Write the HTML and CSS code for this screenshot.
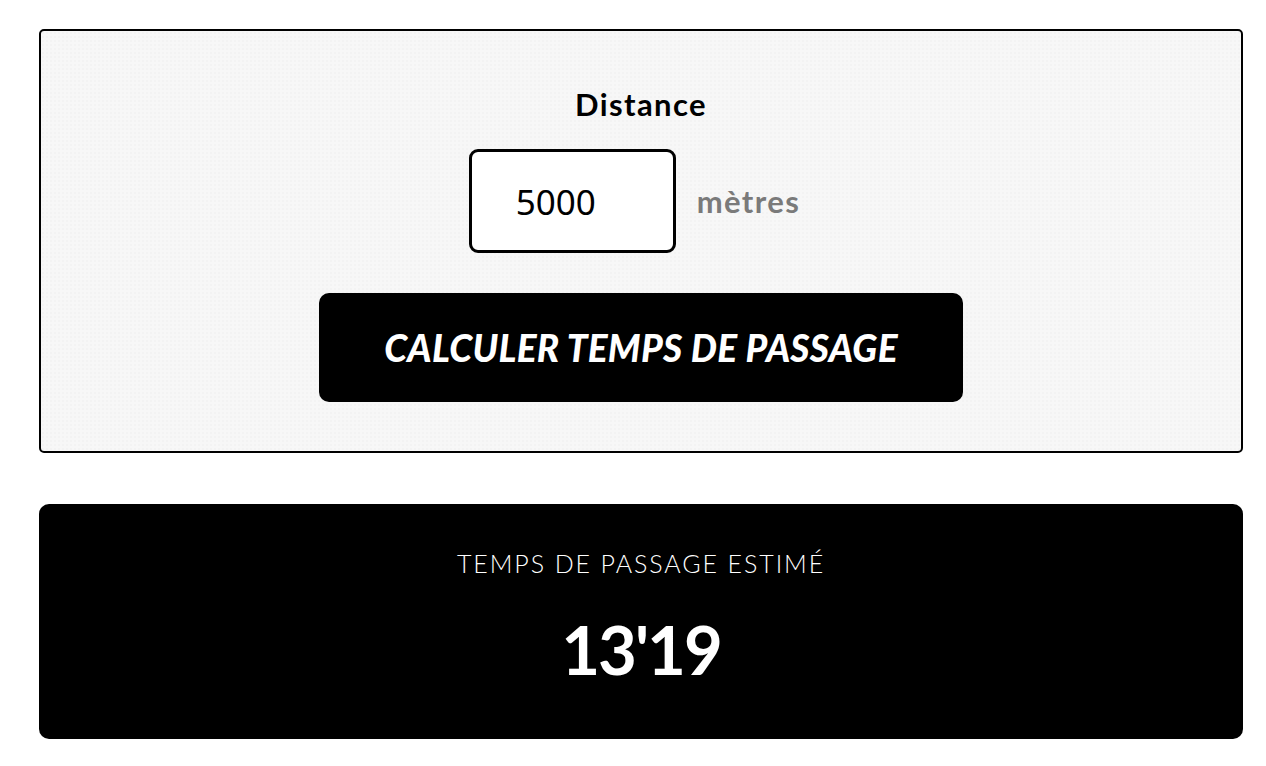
FILE: index.html
```html
<!DOCTYPE html>
<html lang="fr">
<head>
<meta charset="UTF-8" />
<meta name="viewport" content="width=device-width, initial-scale=1" />
<title>Temps de passage</title>
<link rel="stylesheet" href="styles.css">
</head>
<body>

<div class="page">
  <form class="calcPanel" onsubmit="return false;">
    <label class="fieldLabel" for="distance">Distance</label>
    <div class="fieldRow">
      <input id="distance" class="distanceInput" type="text" value="5000" />
      <span class="unit">mètres</span>
    </div>
    <button class="calcButton" type="submit">CALCULER TEMPS DE PASSAGE</button>
  </form>

  <div class="resultBox">
    <div class="resultLabel">Temps de passage estimé</div>
    <div class="resultValue">13'19</div>
  </div>
</div>

</body>
</html>
```

FILE: styles.css
```css
body {
  margin: 0;
  font-family: Lato, "Noto Sans", sans-serif;
  background: #fff;
  color: #000;
}

.page {
  width: 1204px;
  padding: 29px 0 0 39px;
  display: flex;
  flex-direction: column;
  gap: 51px;
}

/* panneau de saisie */
.calcPanel {
  margin: 0;
  border: 2px solid #000;
  border-radius: 5px;
  background-color: #f7f7f7;
  background-image: radial-gradient(#ededed 0.6px, transparent 0.8px);
  background-size: 4px 4px;
  padding: 56px 0 49px;
  display: flex;
  flex-direction: column;
  align-items: center;
}

.fieldLabel {
  font-size: 31px;
  line-height: 34px;
  font-weight: 700;
  letter-spacing: 1.4px;
  margin-bottom: 28px;
}

.fieldRow {
  display: flex;
  align-items: center;
  gap: 21px;
  margin-left: -13px;
  margin-bottom: 40px;
}

.distanceInput {
  box-sizing: border-box;
  width: 207px;
  height: 104px;
  border: 3px solid #000;
  border-radius: 9px;
  background: #fff;
  padding: 0 0 0 44px;
  font-family: "Noto Sans", sans-serif;
  font-size: 35px;
  color: #000;
  outline: none;
}

.unit {
  font-size: 31px;
  font-weight: 700;
  letter-spacing: 1.4px;
  color: #7a7a7a;
}

.calcButton {
  width: 644px;
  height: 109px;
  border: none;
  border-radius: 10px;
  background: #000;
  color: #fff;
  font-family: Lato, sans-serif;
  font-size: 37px;
  font-weight: 900;
  font-style: italic;
  letter-spacing: 0.3px;
  cursor: pointer;
}

/* resultat */
.resultBox {
  background: #000;
  color: #fff;
  border-radius: 10px;
  padding: 44px 0 48px;
  text-align: center;
}

.resultLabel {
  font-size: 25px;
  line-height: 30px;
  font-weight: 300;
  text-transform: uppercase;
  letter-spacing: 1.9px;
  margin-bottom: 29px;
}

.resultValue {
  font-size: 67px;
  line-height: 84px;
  font-weight: 700;
  letter-spacing: -2px;
}
```
